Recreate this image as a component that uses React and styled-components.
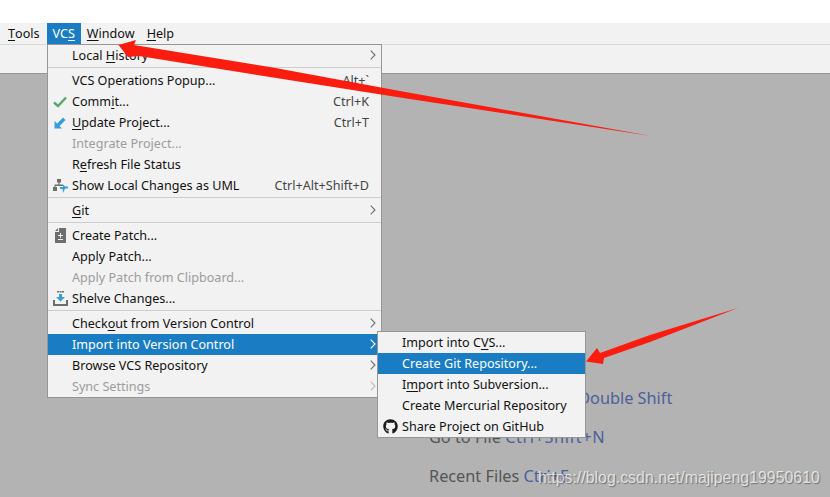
import React from 'react';
import styled, { createGlobalStyle } from 'styled-components';
import { FaGithub } from 'react-icons/fa';

//----------------------------------------------> GLOBAL
const GlobalStyle = createGlobalStyle`
    html, body {
        margin: 0;
        padding: 0;
        background: #fff;
    }
    body {
        font-family: "Noto Sans", "Open Sans", sans-serif;
        font-size: 12.6px;
        color: #111;
    }
`;

//----------------------------------------------> ICONS
const CheckIcon = () => (
    <svg width="14" height="12" viewBox="0 0 14 12">
        <path d="M1 6.5 L5 10 L13 1.5" fill="none" stroke="#59a869" strokeWidth="2.4" />
    </svg>
);
const UpdateIcon = () => (
    <svg width="12" height="12" viewBox="0 0 12 12">
        <path d="M0.5 4 V11.5 H8 L5.6 9 L11.5 3 L9 0.5 L3.2 6.6 Z" fill="#389fd6" />
    </svg>
);
const UmlIcon = () => (
    <svg width="17" height="16" viewBox="0 0 17 16">
        <path d="M5 1 H9 V4.5 H7.6 V6.5 H11 V8 H3.5 V9 H5 V13 H1 V9 H2.5 V6.5 H6.4 V4.5 H5 Z" fill="#6e6e6e" />
        <path d="M8 9 H11 V6.5 L13.2 8.6 L16 8.6 V10.4 L13.2 10.4 L11 15 L10.6 11 H8 Z" fill="#389fd6" />
    </svg>
);
const PatchIcon = () => (
    <svg width="11" height="15" viewBox="0 0 11 15">
        <path fillRule="evenodd" fill="#6e6e6e" d="M4 0 H11 V15 H0 V4 H4 Z M5 5 V7 H3 V8 H5 V10 H6 V8 H8 V7 H6 V5 Z M3 11 V12 H8 V11 Z" />
        <path d="M0 3 L3 0 V3 Z" fill="#6e6e6e" />
    </svg>
);
const ShelveIcon = () => (
    <svg width="15" height="15" viewBox="0 0 15 15">
        <path d="M4 0 H6 V1.5 H4 Z M6.5 0 H8.5 V1.5 H6.5 Z M9 0 H11 V1.5 H9 Z" fill="#6e6e6e" />
        <path d="M6 3 H9 V6 H12 L7.5 10.5 L3 6 H6 Z" fill="#389fd6" />
        <path d="M0 9 H2 V13 H13 V9 H15 V15 H0 Z" fill="#6e6e6e" />
    </svg>
);
const Chevron = ({ $color }) => (
    <ChevronMark width="6" height="10" viewBox="0 0 6 10">
        <path d="M0.7 0.7 L5 5 L0.7 9.3" fill="none" stroke={$color} strokeWidth="1.1" />
    </ChevronMark>
);

//----------------------------------------------> MENU DATA
const vcsMenu = [
    [{ label: <>Local <u>H</u>istory</>, sub: true }],
    [
        { label: 'VCS Operations Popup...', keys: 'Alt+`' },
        { label: <>Comm<u>i</u>t...</>, keys: 'Ctrl+K', icon: <CheckIcon /> },
        { label: <><u>U</u>pdate Project...</>, keys: 'Ctrl+T', icon: <UpdateIcon /> },
        { label: 'Integrate Project...', off: true },
        { label: <>R<u>e</u>fresh File Status</> },
        { label: 'Show Local Changes as UML', keys: 'Ctrl+Alt+Shift+D', icon: <UmlIcon /> },
    ],
    [{ label: <><u>G</u>it</>, sub: true }],
    [
        { label: 'Create Patch...', icon: <PatchIcon /> },
        { label: 'Apply Patch...' },
        { label: 'Apply Patch from Clipboard...', off: true },
        { label: 'Shelve Changes...', icon: <ShelveIcon /> },
    ],
    [
        { label: <>Check<u>o</u>ut from Version Control</>, sub: true },
        { label: 'Import into Version Control', sub: true, active: true },
        { label: 'Browse VCS Repository', sub: true },
        { label: 'Sync Settings', sub: true, off: true },
    ],
];

const importMenu = [
    { label: <>Import into C<u>V</u>S...</> },
    { label: 'Create Git Repository...', active: true },
    { label: <>I<u>m</u>port into Subversion...</> },
    { label: 'Create Mercurial Repository' },
    { label: 'Share Project on GitHub', icon: <FaGithub size={15} color="#1b1b1b" /> },
];

//----------------------------------------------> MENU ROW
const MenuItem = ({ item }) => (
    <Row $active={item.active} $off={item.off}>
        <RowIcon>{item.icon}</RowIcon>
        <RowLabel>{item.label}</RowLabel>
        {item.keys && <Keys>{item.keys}</Keys>}
        {item.sub && <Chevron $color={item.active ? '#fff' : item.off ? '#bdbdbd' : '#6e6e6e'} />}
    </Row>
);

export default function App() {
    return (
        <Page>
            <GlobalStyle />
            <MenuBar>
                <BarItem $after="1px"><u>T</u>ools</BarItem>
                <BarItem $open>VC<u>S</u></BarItem>
                <BarItem><u>W</u>indow</BarItem>
                <BarItem><u>H</u>elp</BarItem>
            </MenuBar>
            <ToolBar />
            <Workspace>
                <Hint>Search Everywhere <HintKey>Double Shift</HintKey></Hint>
                <Hint>Go to File <HintKey $spread="0.6px">Ctrl+Shift+N</HintKey></Hint>
                <Hint>Recent Files <HintKey>Ctrl+E</HintKey></Hint>
            </Workspace>

            <VcsMenu>
                {vcsMenu.map((group, g) => (
                    <React.Fragment key={g}>
                        {g > 0 && <Separator />}
                        {group.map((item, i) => <MenuItem key={i} item={item} />)}
                    </React.Fragment>
                ))}
            </VcsMenu>
            <ImportMenu>
                {importMenu.map((item, i) => <MenuItem key={i} item={item} />)}
            </ImportMenu>

            <Arrows viewBox="0 0 830 497">
                <path d="M118.5 45 L136 40 L134 45 L270 67 L400 91 L651 136 L400 97.5 L270 77 L139 56 L128 57 Z" fill="#fb1c10" />
                <path d="M586 361.5 L597 348 L600 353 L650 335 L738 308 L650 342 L604 358 L603 364 Z" fill="#fb1c10" />
            </Arrows>
            <Watermark>https://blog.csdn.net/majipeng19950610</Watermark>
        </Page>
    );
}

//----------------------------------------------> STYLES
const Page = styled.div`
    position: relative;
    width: 830px;
    height: 497px;
    overflow: hidden;
    padding-top: 23px;
    box-sizing: border-box;
    display: flex;
    flex-direction: column;
    background: #fff;
    u {
        text-underline-offset: 2px;
        text-decoration-thickness: 1px;
    }
`;

const MenuBar = styled.nav`
    display: flex;
    height: 21px;
    padding-left: 2px;
    background: #f2f2f2;
    flex-shrink: 0;
`;

const BarItem = styled.div`
    display: flex;
    align-items: center;
    padding: 0 6px 1px;
    margin-right: ${p => p.$after || '0'};
    background: ${p => p.$open ? '#1a7dc4' : 'transparent'};
    color: ${p => p.$open ? '#fff' : '#111'};
`;

const ToolBar = styled.div`
    height: 28px;
    flex-shrink: 0;
    background: #f2f2f2;
    border-top: 1px solid #d8d8d8;
    border-bottom: 1px solid #969696;
`;

const Workspace = styled.main`
    flex: 1;
    background: #b3b3b3;
    padding: 314px 0 0 429px;
    display: flex;
    flex-direction: column;
    gap: 18px;
`;

const Hint = styled.div`
    font-size: 16.3px;
    line-height: 21px;
    color: #555;
    white-space: nowrap;
`;

const HintKey = styled.span`
    color: #4c5f9c;
    letter-spacing: ${p => p.$spread || 'normal'};
`;

const Popup = styled.div`
    position: absolute;
    box-sizing: border-box;
    background: #f2f2f2;
    border: 1px solid #969696;
`;

const VcsMenu = styled(Popup)`
    left: 47px;
    top: 44px;
    width: 335px;
    height: 354px;
`;

const ImportMenu = styled(Popup)`
    left: 377px;
    top: 331px;
    width: 209px;
    height: 107px;
`;

const Row = styled.div`
    position: relative;
    display: flex;
    align-items: center;
    height: 21px;
    padding: 0 12px 1px 24px;
    box-sizing: border-box;
    white-space: nowrap;
    background: ${p => p.$active ? '#1a7dc4' : 'transparent'};
    color: ${p => p.$active ? '#fff' : p.$off ? '#9c9c9c' : '#111'};
`;

const RowIcon = styled.span`
    position: absolute;
    left: 0;
    top: 0;
    width: 24px;
    height: 21px;
    display: flex;
    align-items: center;
    justify-content: center;
`;

const RowLabel = styled.span`
    flex: 1;
`;

const Keys = styled.span`
    color: #444;
`;

const ChevronMark = styled.svg`
    position: absolute;
    right: 5px;
    top: 5px;
`;

const Separator = styled.div`
    height: 1px;
    margin: 1px 0 2px;
    background: #cdcdcd;
`;

const Arrows = styled.svg`
    position: absolute;
    left: 0;
    top: 0;
    width: 830px;
    height: 497px;
    pointer-events: none;
`;

const Watermark = styled.div`
    position: absolute;
    left: 538px;
    top: 468px;
    font-family: "Liberation Sans", Arial, sans-serif;
    font-size: 15.9px;
    line-height: 20px;
    white-space: nowrap;
    color: rgba(255, 255, 255, 0.72);
    text-shadow: 1px 1px 1px rgba(60, 60, 60, 0.55);
`;
